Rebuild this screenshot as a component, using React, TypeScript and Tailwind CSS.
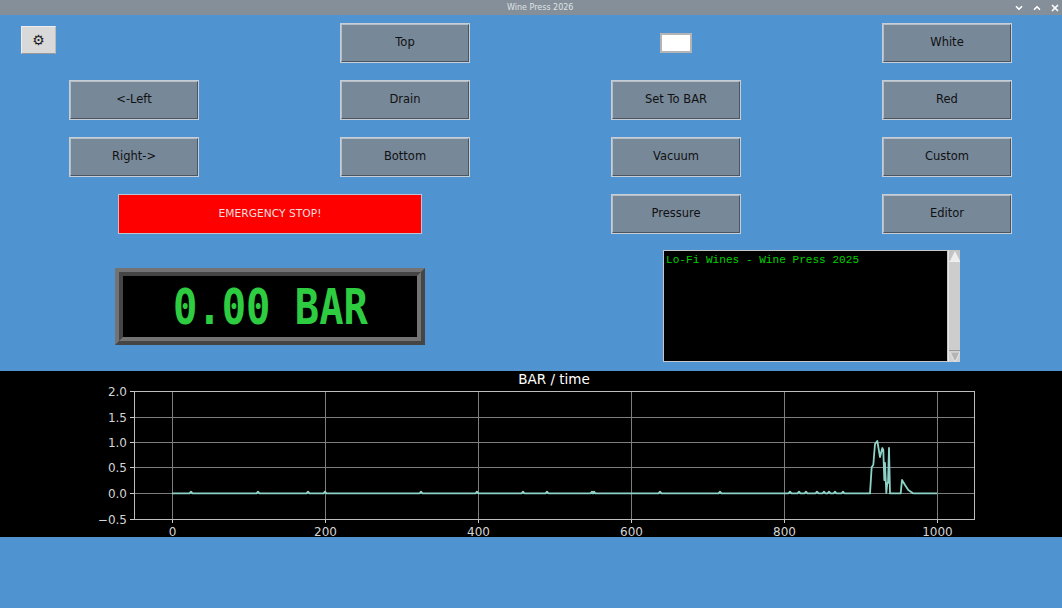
import { ChevronDown, ChevronUp, X } from "lucide-react"

const font = "font-['DejaVu_Sans',sans-serif]"

function PressButton({ label, className = "" }: { label: string; className?: string }) {
    return (
        <button className={`h-10 w-[130px] justify-self-end border border-[#c8ced6] ${className}`}>
            <span className={`flex h-full w-full items-center justify-center border border-[#b4bec9] border-r-[#4a5561] border-b-[#4a5561] bg-[#778899] text-[11.5px] text-[#111] ${font}`}>
                {label}
            </span>
        </button>
    )
}

// pressure trace, in screen px of the plot
const bumps = [191, 258, 308, 325, 421, 477, 523, 547, 592, 594, 660, 720, 790, 799, 806, 817, 824, 829, 835, 843]

function tracePoints() {
    const pts: string[] = ["172,493.4"]
    for (const b of bumps) {
        pts.push(`${b - 1.5},493.4`, `${b},491.6`, `${b + 1.5},493.4`)
    }
    pts.push(
        "870,493.4", "871.7,467", "873.3,465", "875,444", "877.3,441", "880,457", "882.3,448", "883.3,450",
        "884.3,480", "885,463", "886.3,493", "887.3,483", "888,483", "889,448", "890,493.4", "900.7,493.4",
        "902,480", "905,485", "908.3,490", "913.3,493.4", "937,493.4"
    )
    return pts.join(" ")
}

const xTicks = [
    { x: 172.5, label: "0" },
    { x: 325.5, label: "200" },
    { x: 478.5, label: "400" },
    { x: 631.5, label: "600" },
    { x: 784.5, label: "800" },
    { x: 937.5, label: "1000" },
]

const yTicks = [
    { y: 391.5, label: "2.0" },
    { y: 417.5, label: "1.5" },
    { y: 442.5, label: "1.0" },
    { y: 467.5, label: "0.5" },
    { y: 493.5, label: "0.0" },
    { y: 519.5, label: "−0.5" },
]

function Chart() {
    return (
        <svg viewBox="0 371 1062 166" className={`block h-[166px] w-full overflow-visible bg-black ${font}`}>
            <text x="554" y="384" fill="#fff" fontSize="13.5" textAnchor="middle">BAR / time</text>
            {xTicks.map((t) => (
                <g key={t.label}>
                    <line x1={t.x} x2={t.x} y1="391" y2="519" stroke="#7d7d7d" />
                    <line x1={t.x} x2={t.x} y1="519" y2="523" stroke="#ccc" />
                    <text x={t.x} y="536" fill="#d4d4d4" fontSize="12" textAnchor="middle">{t.label}</text>
                </g>
            ))}
            {yTicks.map((t) => (
                <g key={t.label}>
                    <line x1="134" x2="975" y1={t.y} y2={t.y} stroke="#7d7d7d" />
                    <line x1="130" x2="134" y1={t.y} y2={t.y} stroke="#ccc" />
                    <text x="127" y={t.y + 4} fill="#d4d4d4" fontSize="12" textAnchor="end">{t.label}</text>
                </g>
            ))}
            <polyline points={tracePoints()} fill="none" stroke="#8dd3c7" strokeWidth="1.8" strokeLinejoin="round" />
            <rect x="134.5" y="391.5" width="840" height="128" fill="none" stroke="#bdbdbd" />
        </svg>
    )
}

export default function App() {
    return (
        <div className="flex h-[608px] w-[1062px] flex-col overflow-hidden bg-[#4f93d0]">
            {/* Title bar */}
            <div className="relative flex h-[15px] shrink-0 items-center justify-end bg-[#858f99] pr-[2px]">
                <span className={`absolute left-[507px] text-[8px] text-[#dfe3e6] ${font}`}>Wine Press 2026</span>
                <div className="flex items-center gap-[8px] text-white">
                    <ChevronDown size={10} strokeWidth={4} />
                    <ChevronUp size={10} strokeWidth={4} />
                    <X size={10} strokeWidth={4} />
                </div>
            </div>

            {/* Buttons */}
            <div className="mt-2 grid grid-cols-[199px_271px_271px_271px] grid-rows-[40px_40px_40px_40px] gap-y-[17px]">
                <button className="ml-[21px] mt-[3px] flex h-[28px] w-[35px] items-center justify-center self-start border border-[#eee] border-r-[#bbb] border-b-[#999] bg-[#d9d9d9]">
                    <span className={`text-[14px] leading-none text-[#222] ${font}`}>⚙</span>
                </button>
                <PressButton label="Top" />
                <div className="mr-[49px] mt-[10px] h-5 w-[32px] justify-self-end self-start border-2 border-[#b4b4b4] bg-white" />
                <PressButton label="White" />

                <PressButton label="<-Left" />
                <PressButton label="Drain" />
                <PressButton label="Set To BAR" />
                <PressButton label="Red" />

                <PressButton label="Right->" />
                <PressButton label="Bottom" />
                <PressButton label="Vacuum" />
                <PressButton label="Custom" />

                <button className={`col-span-2 ml-[118px] mr-[48px] flex h-10 items-center justify-center border border-[#bcc6d2] bg-[#ff0000] text-[10.7px] text-[#f4dcdc] ${font}`}>
                    EMERGENCY STOP!
                </button>
                <PressButton label="Pressure" />
                <PressButton label="Editor" />
            </div>

            {/* Readout and log */}
            <div className="mt-4 flex h-[112px] shrink-0 items-start pl-[115px] pr-[102px]">
                <div className="mt-[18px] h-[77px] w-[310px] border-4 border-[#737373] border-r-[#454545] border-b-[#454545]">
                    <div className="flex h-full w-full items-center justify-center overflow-hidden border-4 border-[#454545] border-r-[#737373] border-b-[#737373] bg-black">
                        <span className="scale-x-[0.81] whitespace-pre font-['DejaVu_Sans_Mono',monospace] text-[50px] font-bold leading-none text-[#2ecc40]">
                            0.00 BAR
                        </span>
                    </div>
                </div>
                <div className="ml-auto flex h-[112px] w-[297px]">
                    <div className="flex-1 border border-[#c4c8cc] bg-black pt-[2px]">
                        <p className="pl-[2px] pt-[1px] font-['Liberation_Mono',monospace] text-[11.1px] leading-[13px] text-[#00d000]">
                            Lo-Fi Wines - Wine Press 2025
                        </p>
                    </div>
                    <div className="flex w-[12px] flex-col justify-between border-l border-[#e6e6e6] bg-[#cdcdcd]">
                        <div className="flex h-[12px] items-center justify-center border-b border-[#f0f0f0] bg-[#c4c4c4]">
                            <svg width="10" height="10" viewBox="0 0 10 10"><path d="M5 0 L10 10 L0 10 Z" fill="#ededed" /></svg>
                        </div>
                        <div className="flex h-[12px] items-center justify-center border-t border-[#9a9a9a] bg-[#d2d2d2]">
                            <svg width="10" height="10" viewBox="0 0 10 10"><path d="M0 0 L10 0 L5 10 Z" fill="#b4b4b4" stroke="#ececec" strokeWidth="0.8" /></svg>
                        </div>
                    </div>
                </div>
            </div>

            <div className="mt-[9px] shrink-0">
                <Chart />
            </div>
        </div>
    )
}
